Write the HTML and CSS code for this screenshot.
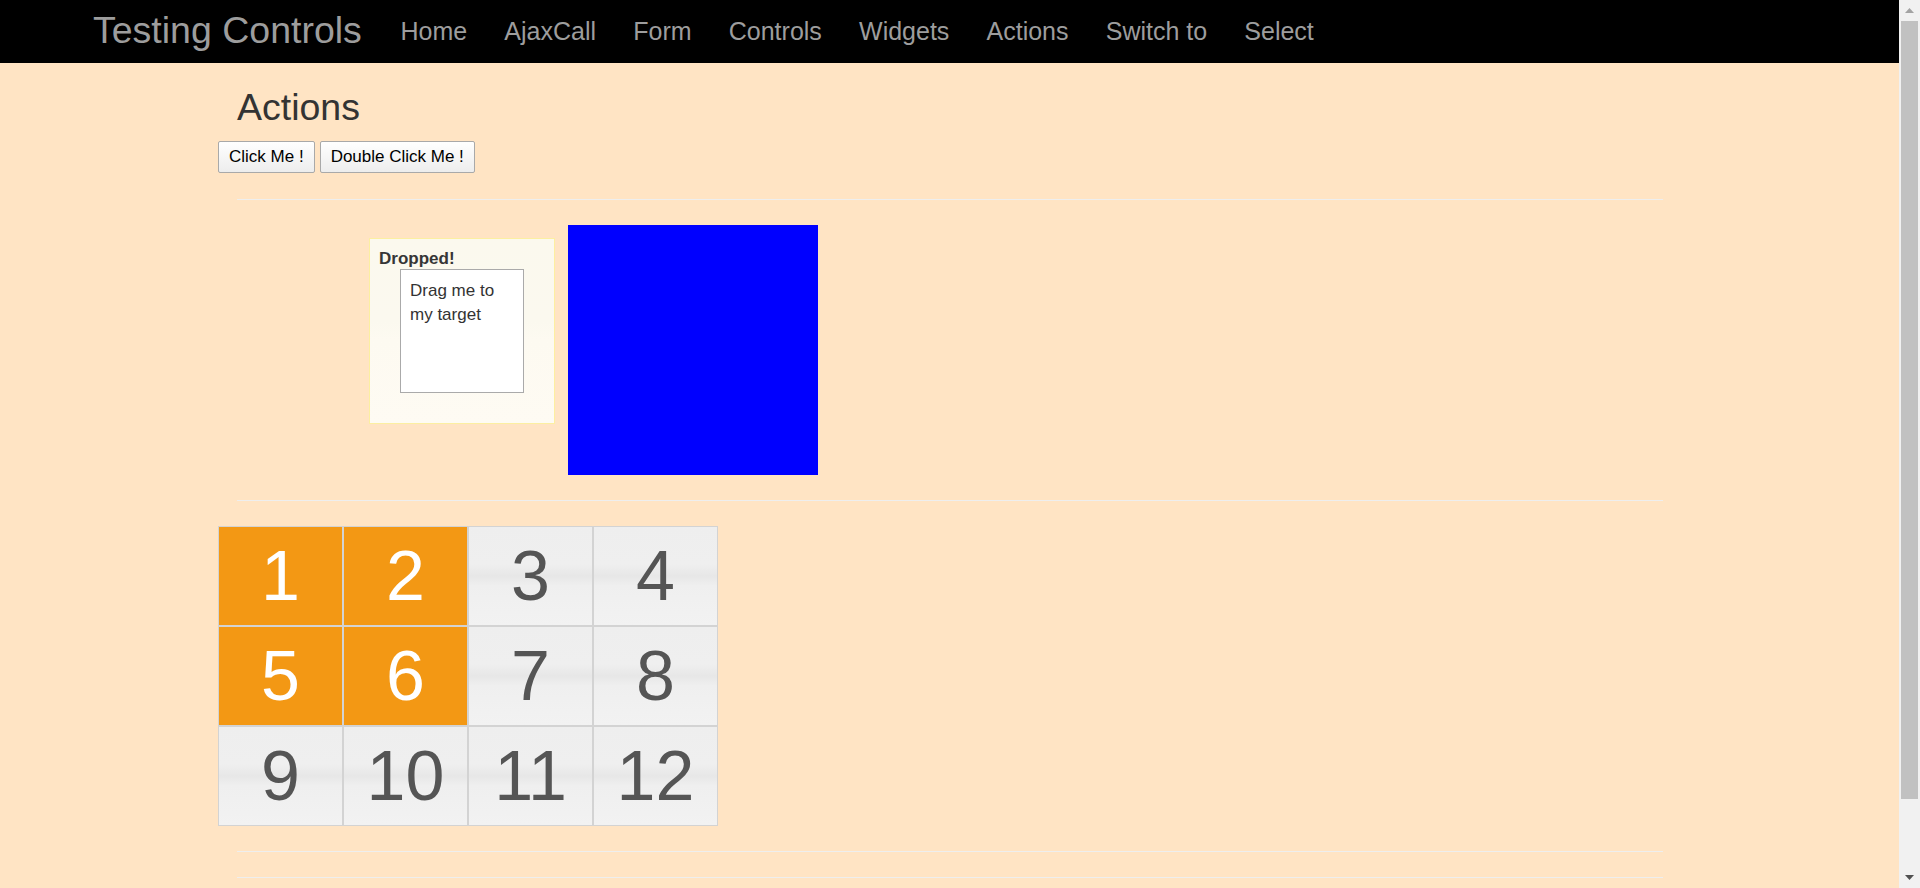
FILE: index.html
```html
<!DOCTYPE html>
<html lang="en">
<head>
<meta charset="utf-8">
<title>Actions</title>
<link rel="stylesheet" href="styles.css">
</head>
<body>
<nav class="navbar">
  <a class="brand" href="#">Testing Controls</a>
  <ul class="nav">
    <li><a href="#">Home</a></li>
    <li><a href="#">AjaxCall</a></li>
    <li><a href="#">Form</a></li>
    <li><a href="#">Controls</a></li>
    <li><a href="#">Widgets</a></li>
    <li><a href="#">Actions</a></li>
    <li><a href="#">Switch to</a></li>
    <li><a href="#">Select</a></li>
  </ul>
</nav>
<main class="main">
  <h1 class="title">Actions</h1>
  <div class="toolbar">
    <button class="btn" type="button">Click Me !</button>
    <button class="btn" type="button">Double Click Me !</button>
  </div>
  <hr class="rule rule-first">
  <div class="drag-row">
    <div class="draggable"><p>Drag me to my target</p></div>
    <div class="droppable"><p><b>Dropped!</b></p></div>
    <div class="blue-box"></div>
  </div>
  <hr class="rule">
  <ol class="selectable">
    <li class="cell selected">1</li>
    <li class="cell selected">2</li>
    <li class="cell">3</li>
    <li class="cell">4</li>
    <li class="cell selected">5</li>
    <li class="cell selected">6</li>
    <li class="cell">7</li>
    <li class="cell">8</li>
    <li class="cell">9</li>
    <li class="cell">10</li>
    <li class="cell">11</li>
    <li class="cell">12</li>
  </ol>
  <hr class="rule">
  <hr class="rule">
</main>
<div class="scrollbar" aria-hidden="true">
  <svg class="arrow arrow-up" width="21" height="21" viewBox="0 0 21 21"><polygon points="6,13 15,13 10.5,8" fill="#a3a3a3"/></svg>
  <div class="scroll-track"><div class="scroll-thumb"></div></div>
  <svg class="arrow arrow-down" width="21" height="21" viewBox="0 0 21 21"><polygon points="6,8 15,8 10.5,13" fill="#505050"/></svg>
</div>
</body>
</html>
```
FILE: styles.css
```css
html {
  background: #ffe4c4;
}
body {
  margin: 0;
  background: #ffe4c4;
  font-family: "Liberation Sans", Arial, sans-serif;
  font-size: 17px;
  line-height: 1.42857;
  color: #333;
}
.scrollbar {
  position: fixed;
  top: 0;
  right: 0;
  bottom: 0;
  width: 21px;
  display: flex;
  flex-direction: column;
  background: #f1f1f1;
}
.arrow {
  display: block;
  flex: none;
}
.scroll-track {
  flex: 1;
  padding: 0 2px;
}
.scroll-thumb {
  height: 778px;
  background: #c1c1c1;
}
.navbar {
  display: flex;
  align-items: flex-start;
  height: 63px;
  background: #000;
  padding-left: 93px;
}
.brand {
  font-size: 37.5px;
  line-height: 60px;
  color: #9d9d9d;
  text-decoration: none;
  margin-right: 20px;
}
.nav {
  display: flex;
  list-style: none;
  margin: 0;
  padding: 0;
}
.nav a {
  display: block;
  padding: 0 18.6px;
  font-size: 25px;
  line-height: 63px;
  color: #9d9d9d;
  text-decoration: none;
}
.main {
  padding: 0 0 62px 218px;
}
.title {
  margin: 24px 0 13px 19px;
  font-size: 37.5px;
  line-height: 41px;
  font-weight: 500;
  color: #333;
}
.toolbar {
  display: flex;
  gap: 5px;
}
.btn {
  font-family: "Liberation Sans", Arial, sans-serif;
  font-size: 17px;
  line-height: 20px;
  padding: 5px 10px;
  color: #000;
  background: linear-gradient(#ffffff, #ededed);
  border: 1px solid #a9a9a9;
  border-radius: 2px;
}
.rule {
  box-sizing: content-box;
  width: 1426px;
  height: 0;
  margin: 25px 0 25px 19px;
  border: 0;
  border-top: 1px solid #eeeeee;
}
.rule-first {
  margin-top: 26px;
}
.drag-row {
  display: flex;
  align-items: flex-start;
  height: 250px;
  margin-left: 1px;
}
.draggable {
  position: relative;
  left: 181px;
  top: 31px;
  width: 104px;
  height: 104px;
  padding: 9px;
  margin: 13px 13px 13px 0;
  background: #fff;
  border: 1px solid #aaaaaa;
  color: #333;
}
.draggable p,
.droppable p {
  margin: 0;
}
.droppable {
  width: 166px;
  height: 166px;
  padding: 8px 9px 10px 9px;
  margin: 13px;
  border: 1px solid #fcefa1;
  background: linear-gradient(#fbf9ee 0%, #fbf9ef 45%, #fdfaf1 55%, #fefbf3 100%);
  color: #363636;
}
.blue-box {
  width: 250px;
  height: 250px;
  background: #0000ff;
}
.selectable {
  display: grid;
  grid-template-columns: repeat(4, 125px);
  grid-auto-rows: 100px;
  list-style: none;
  margin: 0;
  padding: 0;
  width: 500px;
}
.cell {
  box-sizing: border-box;
  border: 1px solid #d3d3d3;
  background: linear-gradient(#eeeeee 0%, #efefef 38%, #e7e7e7 50%, #efefef 60%, #f2f2f2 100%);
  color: #555555;
  font-size: 70px;
  line-height: 98px;
  text-align: center;
}
.cell.selected {
  background: #f39814;
  color: #ffffff;
}
```
